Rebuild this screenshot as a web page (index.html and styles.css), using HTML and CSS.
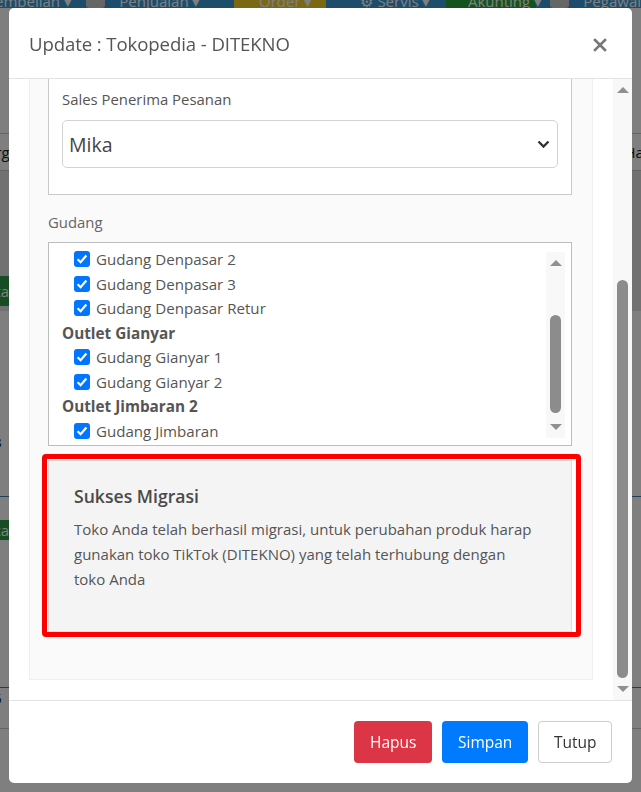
FILE: index.html
```html
<!DOCTYPE html>
<html lang="id">
<head>
<meta charset="utf-8">
<title>Update : Tokopedia - DITEKNO</title>
<link rel="stylesheet" href="styles.css">
</head>
<body>
<div class="page">
  <nav class="navbar">
    <span class="nav-item nav-first">Pembelian ▾</span>
    <span class="nav-icon"></span>
    <span class="nav-item">Penjualan ▾</span>
    <span class="nav-btn nav-yellow"><span class="nav-icon small"></span>Order ▾</span>
    <span class="nav-item nav-gear">⚙ Servis ▾</span>
    <span class="nav-btn nav-green"><span class="nav-icon small"></span>Akunting ▾</span>
    <span class="nav-icon"></span>
    <span class="nav-item">Pegawai</span>
  </nav>
  <div class="pg-space-a"></div>
  <div class="pg-row"><span class="pg-left">Harga</span><span class="pg-right">Hap</span></div>
  <div class="pg-dark"><span class="pg-tab">Total</span></div>
  <div class="pg-space-b"><span class="pg-left">123</span></div>
  <div class="pg-blue-line"></div>
  <div class="pg-space-c"><span class="pg-tab">Total</span></div>
  <div class="pg-space-d"><span class="pg-left">175</span></div>
  <div class="pg-blue-line"></div>
  <div class="pg-space-e"></div>
</div>

<div class="backdrop"></div>

<div class="modal">
  <div class="modal-header">
    <h4 class="modal-title">Update : Tokopedia - DITEKNO</h4>
    <span class="close-btn" aria-label="Tutup">
      <svg width="14" height="14" viewBox="0 0 14 14"><path d="M2 2 L12 12 M12 2 L2 12" stroke="#777" stroke-width="2.6" stroke-linecap="square"/></svg>
    </span>
  </div>

  <div class="modal-body">
    <div class="body-content">
      <div class="well">
        <div class="sales-box">
          <div class="field-label">Sales Penerima Pesanan</div>
          <div class="select-box">
            <span>Mika</span>
            <svg width="13" height="9" viewBox="0 0 13 9"><path d="M1.5 1.5 L6.5 6.5 L11.5 1.5" fill="none" stroke="#333" stroke-width="2.4"/></svg>
          </div>
        </div>

        <div class="gudang-label">Gudang</div>
        <div class="list-box">
          <div class="list-items">
            <div class="item"><span class="check"><svg width="16" height="16" viewBox="0 0 16 16"><path d="M3.6 8.3 L6.6 11.2 L12.4 4.6" fill="none" stroke="#fff" stroke-width="2.2"/></svg></span>Gudang Denpasar 2</div>
            <div class="item"><span class="check"><svg width="16" height="16" viewBox="0 0 16 16"><path d="M3.6 8.3 L6.6 11.2 L12.4 4.6" fill="none" stroke="#fff" stroke-width="2.2"/></svg></span>Gudang Denpasar 3</div>
            <div class="item"><span class="check"><svg width="16" height="16" viewBox="0 0 16 16"><path d="M3.6 8.3 L6.6 11.2 L12.4 4.6" fill="none" stroke="#fff" stroke-width="2.2"/></svg></span>Gudang Denpasar Retur</div>
            <div class="group">Outlet Gianyar</div>
            <div class="item"><span class="check"><svg width="16" height="16" viewBox="0 0 16 16"><path d="M3.6 8.3 L6.6 11.2 L12.4 4.6" fill="none" stroke="#fff" stroke-width="2.2"/></svg></span>Gudang Gianyar 1</div>
            <div class="item"><span class="check"><svg width="16" height="16" viewBox="0 0 16 16"><path d="M3.6 8.3 L6.6 11.2 L12.4 4.6" fill="none" stroke="#fff" stroke-width="2.2"/></svg></span>Gudang Gianyar 2</div>
            <div class="group">Outlet Jimbaran 2</div>
            <div class="item"><span class="check"><svg width="16" height="16" viewBox="0 0 16 16"><path d="M3.6 8.3 L6.6 11.2 L12.4 4.6" fill="none" stroke="#fff" stroke-width="2.2"/></svg></span>Gudang Jimbaran</div>
          </div>
          <div class="scrollbar list-scroll">
            <span class="arrow-up"></span>
            <span class="track"><span class="thumb list-thumb"></span></span>
            <span class="arrow-down"></span>
          </div>
        </div>

        <div class="migrasi-mark">
          <div class="migrasi-box">
            <h5 class="migrasi-title">Sukses Migrasi</h5>
            <p class="migrasi-text">Toko Anda telah berhasil migrasi, untuk perubahan produk harap gunakan toko TikTok (DITEKNO) yang telah terhubung dengan toko Anda</p>
          </div>
        </div>
      </div>
    </div>
    <div class="scrollbar body-scroll">
      <span class="arrow-up"></span>
      <span class="track"><span class="thumb body-thumb"></span></span>
      <span class="arrow-down"></span>
    </div>
  </div>

  <div class="modal-footer">
    <button class="btn btn-danger">Hapus</button>
    <button class="btn btn-primary">Simpan</button>
    <button class="btn btn-light">Tutup</button>
  </div>
</div>
</body>
</html>
```

FILE: styles.css
```css
* { box-sizing: border-box; }

html, body {
  margin: 0;
  padding: 0;
  width: 641px;
  height: 792px;
  overflow: hidden;
  background: #ffffff;
  font-family: "Open Sans", "Noto Sans", "Liberation Sans", sans-serif;
  color: #555;
}

/* ---------- underlying page (dimmed by the backdrop) ---------- */
.page {
  width: 641px;
  display: flex;
  flex-direction: column;
}

.navbar {
  height: 22px;
  margin-top: -14px;
  background: #3d9ad8;
  display: flex;
  align-items: stretch;
  gap: 14px;
  font-size: 15px;
  color: #fff;
  white-space: nowrap;
  overflow: hidden;
}
.nav-item { display: flex; align-items: flex-end; line-height: 14px; }
.nav-first { margin-left: -14px; }
.nav-icon { width: 26px; background: #ccc; border-radius: 3px; }
.nav-icon.small { width: 18px; margin-right: 8px; }
.nav-btn { display: flex; align-items: flex-end; padding: 0 14px; line-height: 14px; }
.nav-yellow { background: #f4d12a; width: 92px; margin-left: 20px; }
.nav-green { background: #2aa63c; width: 90px; }
.nav-gear { width: 96px; margin-left: 20px; }

.pg-space-a { height: 125px; }
.pg-row {
  height: 38px;
  border-top: 1px solid #c8c8c8;
  border-bottom: 1px solid #c8c8c8;
  display: flex;
  justify-content: space-between;
  align-items: center;
  font-size: 15px;
  color: #222;
}
.pg-left { margin-left: -24px; font-size: 15px; color: #222; }
.pg-right { margin-right: -12px; }
.pg-dark {
  height: 140px;
  background: #e2e2e2;
  display: flex;
  align-items: flex-end;
  padding-bottom: 5px;
}
.pg-tab {
  background: #2e9a45;
  color: #fff;
  font-size: 15px;
  height: 30px;
  line-height: 30px;
  padding: 0 6px;
  margin-left: -28px;
}
.pg-space-b { height: 185px; display: flex; align-items: flex-end; padding-bottom: 44px; }
.pg-blue-line { height: 1px; background: #3d7fb0; }
.pg-space-c { height: 190px; padding-top: 18px; }
.pg-space-d { height: 0; }
.pg-space-e { height: 40px; border-top: 1px solid #c8c8c8; margin-top: 40px; }

/* ---------- backdrop & modal ---------- */
.backdrop {
  position: fixed;
  inset: 0;
  background: rgba(0, 0, 0, 0.5);
}

.modal {
  position: fixed;
  left: 9px;
  top: 8px;
  width: 623px;
  height: 775px;
  background: #fff;
  border-radius: 5px;
  display: flex;
  flex-direction: column;
  overflow: hidden;
}

.modal-header {
  height: 71px;
  flex: none;
  border-bottom: 1px solid #e3e3e3;
  display: flex;
  align-items: center;
  justify-content: space-between;
  padding: 0 25px 0 20px;
}
.modal-title {
  margin: 0;
  font-size: 18.6px;
  font-weight: 400;
  color: #555;
  letter-spacing: -0.1px;
}
.close-btn { display: flex; padding-top: 3px; }

.modal-body {
  flex: 1;
  display: flex;
  min-height: 0;
  overflow: hidden;
}
.body-content {
  flex: 1;
  padding: 0 20px 20px 20px;
  display: flex;
  flex-direction: column;
  justify-content: flex-end;
}

.well {
  background: #fafafa;
  border: 1px solid #efefef;
  border-top: 0;
  padding: 0 20px 42px 18px;
  display: flex;
  flex-direction: column;
}

.sales-box {
  background: #fff;
  border: 1px solid #c9c9c9;
  border-top: 0;
  padding: 12px 13px 26px 13px;
}
.field-label {
  font-size: 14.9px;
  line-height: 22px;
  color: #555;
  margin-bottom: 10px;
}
.select-box {
  height: 48px;
  border: 1px solid #cfd4d9;
  border-radius: 5px;
  display: flex;
  align-items: center;
  justify-content: space-between;
  padding: 0 7px 0 6px;
  font-size: 19.5px;
  color: #444;
}

.gudang-label {
  margin-top: 16px;
  font-size: 14.9px;
  line-height: 22px;
  color: #666;
}
.list-box {
  margin-top: 9px;
  height: 204px;
  background: #fff;
  border: 1px solid #bdbdbd;
  display: flex;
  overflow: hidden;
}
.list-items {
  flex: 1;
  padding: 4px 0 0 13px;
  font-size: 15.1px;
  color: #555;
}
.item {
  height: 24.5px;
  display: flex;
  align-items: center;
  padding-left: 12px;
}
.group {
  height: 24.5px;
  display: flex;
  align-items: center;
  font-weight: 700;
  font-size: 15.3px;
  color: #555;
}
.check {
  width: 16px;
  height: 16px;
  border-radius: 3px;
  background: #0075ff;
  margin-right: 6px;
  display: flex;
}

.scrollbar {
  display: flex;
  flex-direction: column;
  align-items: center;
  background: #f8f8f8;
}
.list-scroll {
  width: 19px;
  margin: 9px 6px 7px 0;
}
.body-scroll {
  width: 19px;
  background: #f8f8f8;
}
.arrow-up, .arrow-down {
  width: 0;
  height: 0;
  border-left: 6px solid transparent;
  border-right: 6px solid transparent;
  flex: none;
}
.arrow-up { border-bottom: 6px solid #909090; margin-top: 8px; }
.arrow-down { border-top: 6px solid #909090; margin-bottom: 8px; }
.track {
  flex: 1;
  width: 100%;
  display: flex;
  flex-direction: column;
  align-items: center;
}
.thumb {
  width: 11px;
  background: #8c8c8c;
  border-radius: 6px;
}
.list-thumb { height: 98px; margin-top: 49px; }
.body-thumb { height: 398px; margin-top: 187px; }

.migrasi-mark {
  margin: 8px -9px 0 -6px;
  border: 5px solid #ff0000;
  border-radius: 4px;
  background: #fff;
}
.migrasi-box {
  background: #f4f4f4;
  border: 1px solid #dedede;
  margin: 1px 4px 0 1px;
  height: 172px;
  padding: 23px 33px 0 25px;
}
.migrasi-title {
  margin: 0 0 8px 0;
  font-size: 17.6px;
  font-weight: 600;
  color: #4a4a4a;
  line-height: 25px;
}
.migrasi-text {
  margin: 0;
  font-size: 15px;
  line-height: 25px;
  color: #555;
}

.modal-footer {
  height: 83px;
  flex: none;
  border-top: 1px solid #e3e3e3;
  display: flex;
  align-items: center;
  justify-content: flex-end;
  gap: 10px;
  padding: 0 20px 1px 0;
}
.btn {
  height: 42px;
  border-radius: 4px;
  font-family: inherit;
  font-size: 15.5px;
  border: 1px solid transparent;
  padding: 0 15px;
  cursor: pointer;
}
.btn-danger { background: #dc3545; color: #fff; width: 78px; }
.btn-primary { background: #007bff; color: #fff; width: 86px; }
.btn-light { background: #fff; color: #333; border-color: #cccccc; width: 74px; }
```
